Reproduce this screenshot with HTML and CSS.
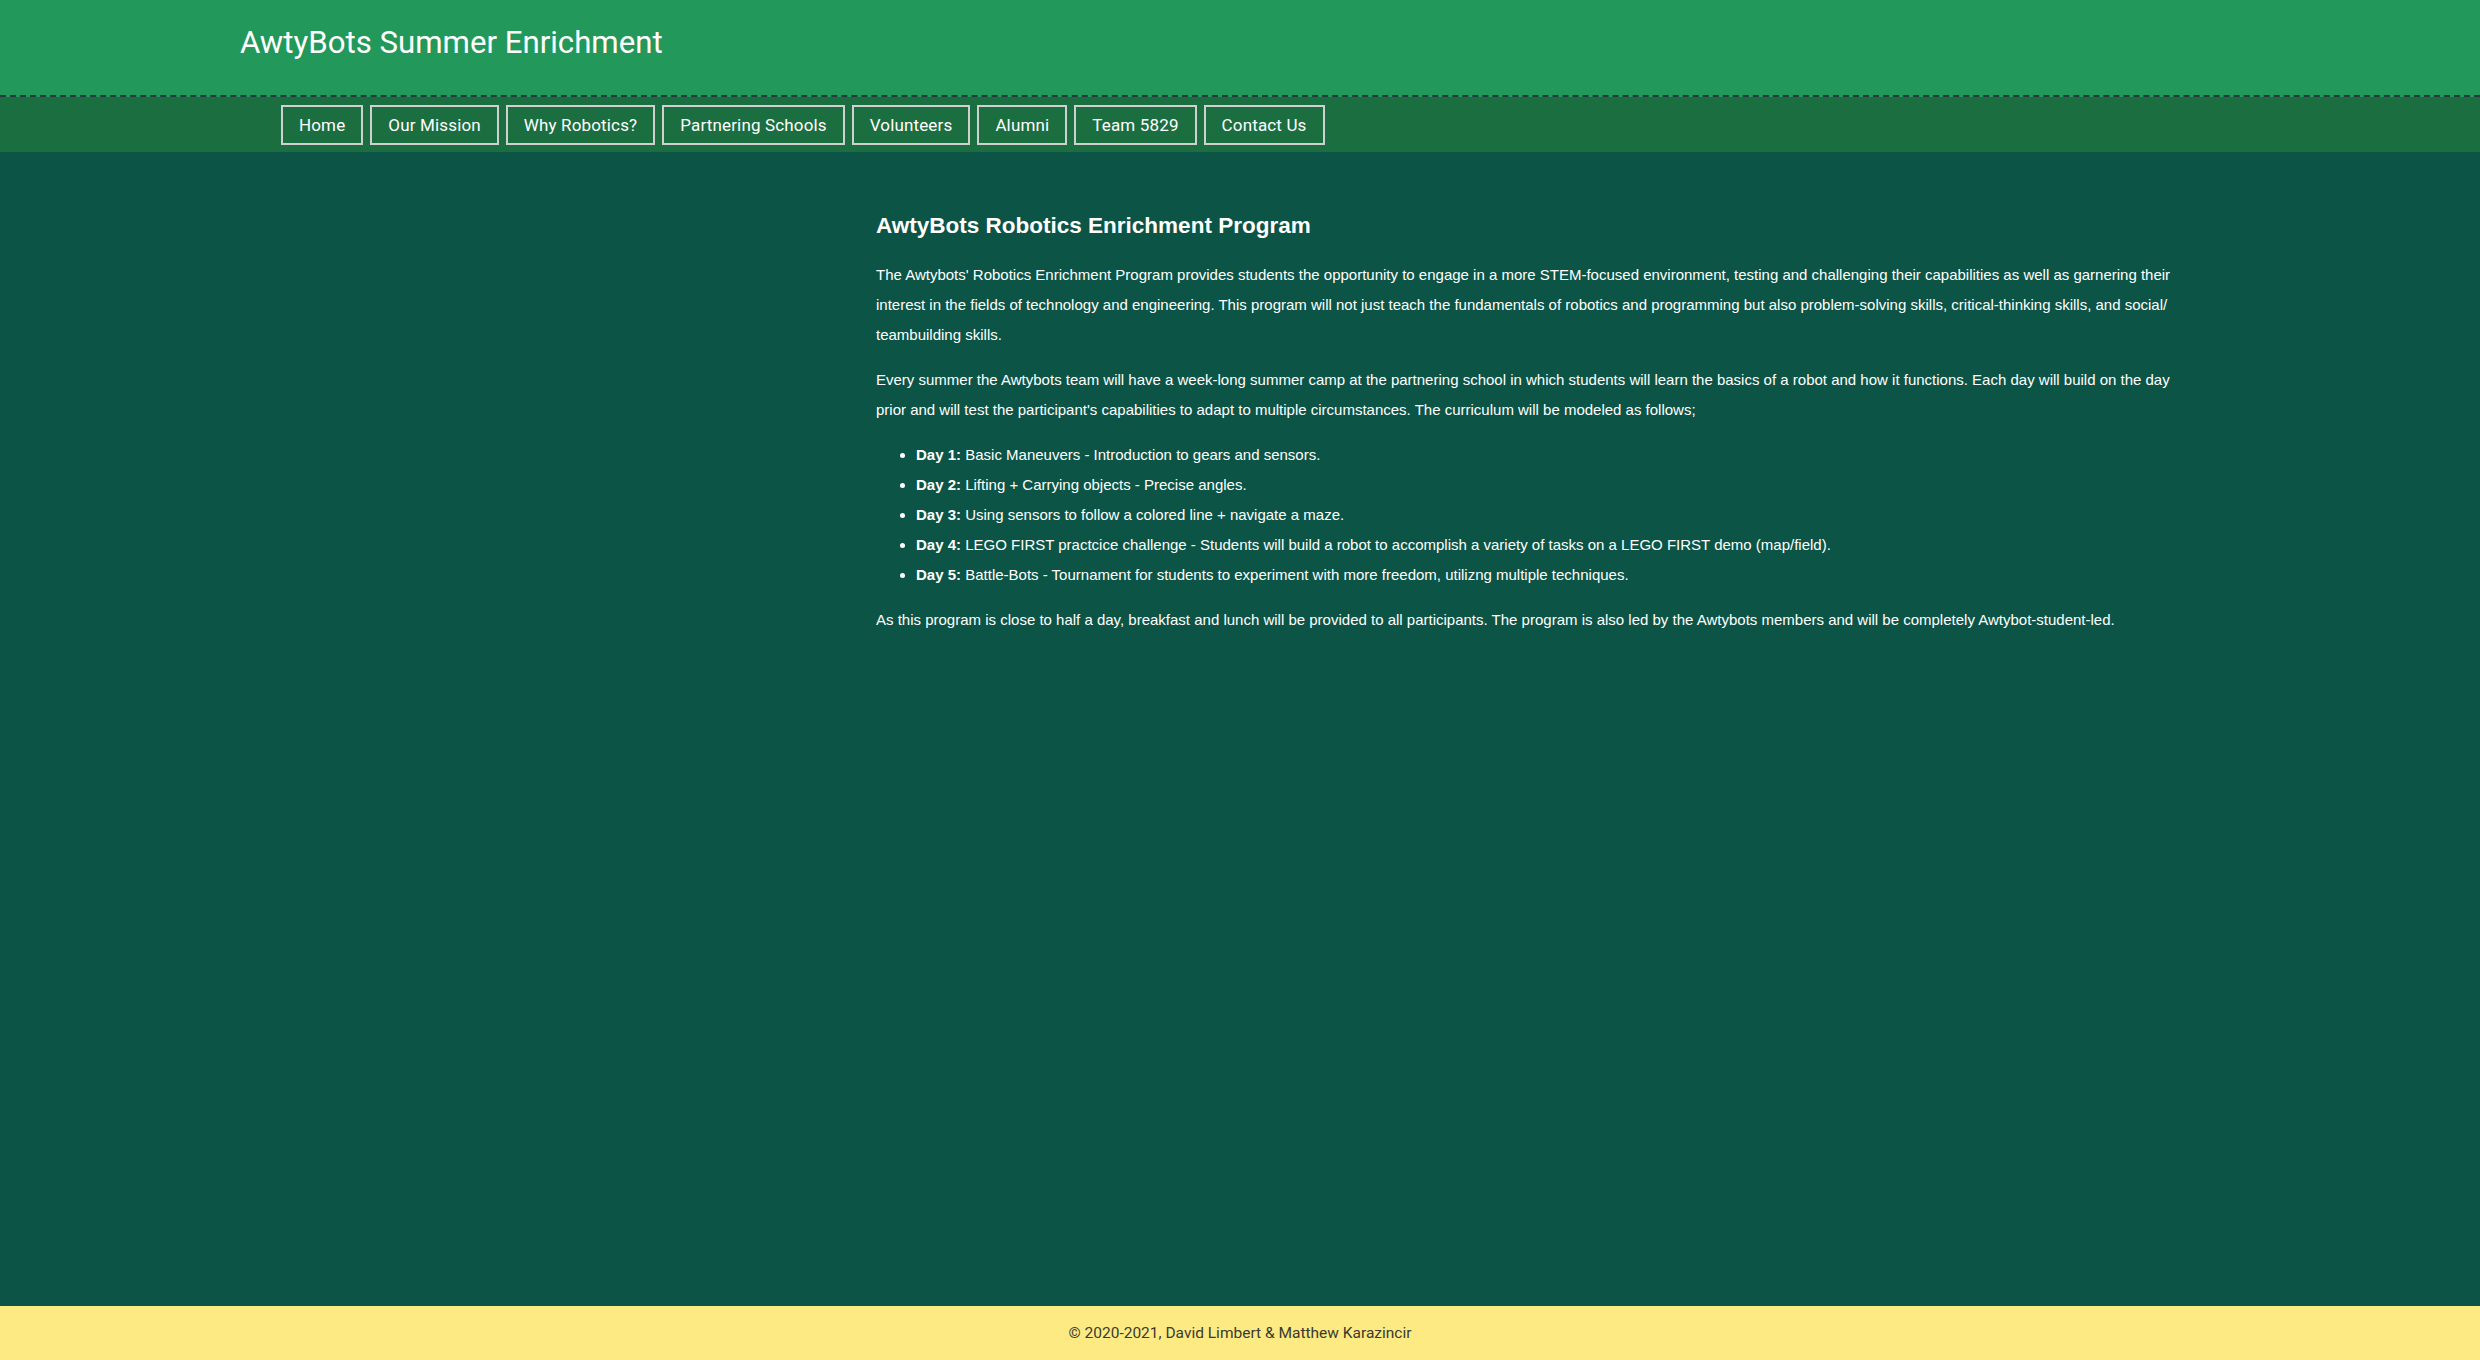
FILE: index.html
```html
<!DOCTYPE html>
<html lang="en">
<head>
<meta charset="utf-8">
<title>AwtyBots Summer Enrichment</title>
<link rel="stylesheet" href="styles.css">
</head>
<body>
<div class="page">
  <header class="site-header">
    <h1 class="site-title">AwtyBots Summer Enrichment</h1>
  </header>
  <nav class="site-nav">
    <ul class="nav-list">
      <li><a class="nav-btn" href="#">Home</a></li>
      <li><a class="nav-btn" href="#">Our Mission</a></li>
      <li><a class="nav-btn" href="#">Why Robotics?</a></li>
      <li><a class="nav-btn" href="#">Partnering Schools</a></li>
      <li><a class="nav-btn" href="#">Volunteers</a></li>
      <li><a class="nav-btn" href="#">Alumni</a></li>
      <li><a class="nav-btn" href="#">Team 5829</a></li>
      <li><a class="nav-btn" href="#">Contact Us</a></li>
    </ul>
  </nav>
  <main class="main">
    <aside class="sidebar"></aside>
    <article class="content">
      <h2 class="content-title">AwtyBots Robotics Enrichment Program</h2>
      <p>The Awtybots' Robotics Enrichment Program provides students the opportunity to engage in a more STEM-focused environment, testing and challenging their capabilities as well as garnering their interest in the fields of technology and engineering. This program will not just teach the fundamentals of robotics and programming but also problem-solving skills, critical-thinking skills, and social/<wbr>teambuilding skills.</p>
      <p>Every summer the Awtybots team will have a week-long summer camp at the partnering school in which students will learn the basics of a robot and how it functions. Each day will build on the day prior and will test the participant's capabilities to adapt to multiple circumstances. The curriculum will be modeled as follows;</p>
      <ul class="days">
        <li><b>Day 1:</b> Basic Maneuvers - Introduction to gears and sensors.</li>
        <li><b>Day 2:</b> Lifting + Carrying objects - Precise angles.</li>
        <li><b>Day 3:</b> Using sensors to follow a colored line + navigate a maze.</li>
        <li><b>Day 4:</b> LEGO FIRST practcice challenge - Students will build a robot to accomplish a variety of tasks on a LEGO FIRST demo (map/field).</li>
        <li><b>Day 5:</b> Battle-Bots - Tournament for students to experiment with more freedom, utilizng multiple techniques.</li>
      </ul>
      <p>As this program is close to half a day, breakfast and lunch will be provided to all participants. The program is also led by the Awtybots members and will be completely Awtybot-student-led.</p>
    </article>
  </main>
  <footer class="site-footer">© 2020-2021, David Limbert &amp; Matthew Karazincir</footer>
</div>
</body>
</html>
```
FILE: styles.css
```css
* { box-sizing: border-box; }
html, body { margin: 0; padding: 0; }
body {
  background: #0b5446;
  font-family: "Liberation Sans", Arial, sans-serif;
}
.page {
  display: flex;
  flex-direction: column;
  min-height: 100vh;
}
.site-header {
  background: #22995a;
  height: 97px;
  border-bottom: 2px dashed #2a3742;
  padding: 25px 0 0 240px;
}
.site-title {
  margin: 0;
  font-family: Roboto, "Noto Sans", sans-serif;
  font-weight: 400;
  font-size: 31.2px;
  line-height: 36px;
  color: #ffffff;
}
.site-nav {
  background: #1b6e40;
  height: 55px;
  display: flex;
  align-items: center;
  padding-left: 281px;
}
.nav-list {
  list-style: none;
  margin: 0;
  padding: 0;
  display: flex;
  gap: 7px;
}
.nav-btn {
  display: block;
  height: 40px;
  padding: 0 16px;
  border: 2px solid #d0d0d0;
  color: #ffffff;
  text-decoration: none;
  font-family: Roboto, "Noto Sans", sans-serif;
  font-size: 17px;
  letter-spacing: 0.15px;
  line-height: 36px;
}
.main {
  flex: 1;
  display: grid;
  grid-template-columns: 636px 1310px;
  padding: 61px 0 0 240px;
  align-content: start;
}
.content {
  color: #ffffff;
  font-size: 15px;
  line-height: 30px;
}
.content-title {
  margin: 0 0 22px;
  font-size: 22.5px;
  line-height: 25px;
  font-weight: 700;
}
.content p { margin: 15px 0; }
.content-title + p { margin-top: 0; }
.days {
  margin: 15px 0;
  padding-left: 40px;
}
.site-footer {
  background: #feea83;
  height: 54px;
  display: flex;
  align-items: center;
  justify-content: center;
  font-family: Roboto, "Noto Sans", sans-serif;
  font-size: 15.5px;
  color: #3a3a2e;
}
```
